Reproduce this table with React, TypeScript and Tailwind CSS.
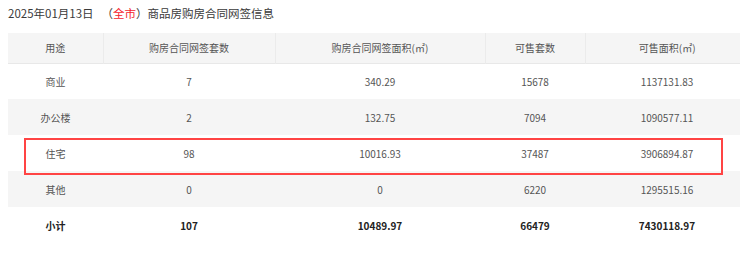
import React from 'react';

const rows = [
  { name: '商业', count: '7', area: '340.29', sale: '15678', saleArea: '1137131.83' },
  { name: '办公楼', count: '2', area: '132.75', sale: '7094', saleArea: '1090577.11' },
  { name: '住宅', count: '98', area: '10016.93', sale: '37487', saleArea: '3906894.87' },
  { name: '其他', count: '0', area: '0', sale: '6220', saleArea: '1295515.16' },
];

const headers = ['用途', '购房合同网签套数', '购房合同网签面积(㎡)', '可售套数', '可售面积(㎡)'];
const widths = ['w-[95px]', 'w-[172px]', 'w-[210px]', 'w-[100px]', 'w-[164px]'];

const App: React.FC = () => {
  return (
    <div className="w-[740px] h-[256px] overflow-hidden bg-white font-['Noto_Sans_CJK_SC',sans-serif] text-[#333]">
      {/* Title */}
      <div className="h-[33px] pl-2 pt-[4px] text-[11.5px] leading-[18px] whitespace-pre text-[#3a3a3a]">
        2025年01月13日<span className="ml-[8px]">（</span>
        <span className="text-[#f5222d]">全市</span>）商品房购房合同网签信息
      </div>

      <div className="relative ml-2 w-[741px]">
        <table className="table-fixed border-collapse text-[10px] text-center">
          <thead>
            <tr className="h-[30px] bg-[#f5f5f5] border-b border-[#e8e8e8]">
              {headers.map((h, i) => (
                <th
                  key={h}
                  className={`${widths[i]} font-normal text-[#555] ${i > 0 ? 'border-l border-[#ebebeb]' : ''}`}
                >
                  {h}
                </th>
              ))}
            </tr>
          </thead>
          <tbody>
            {rows.map((r, i) => (
              <tr key={r.name} className={`h-[36px] text-[#555] ${i % 2 === 1 ? 'bg-[#f5f5f5]' : 'bg-white'}`}>
                <td>{r.name}</td>
                <td>{r.count}</td>
                <td>{r.area}</td>
                <td>{r.sale}</td>
                <td>{r.saleArea}</td>
              </tr>
            ))}
            <tr className="h-[36px] font-bold text-[#222]">
              <td>小计</td>
              <td>107</td>
              <td>10489.97</td>
              <td>66479</td>
              <td>7430118.97</td>
            </tr>
          </tbody>
        </table>

        {/* highlight box */}
        <div className="absolute left-[16px] top-[105px] w-[699px] h-[37px] border-2 border-[#f44] pointer-events-none" />
      </div>
    </div>
  );
};

export default App;
